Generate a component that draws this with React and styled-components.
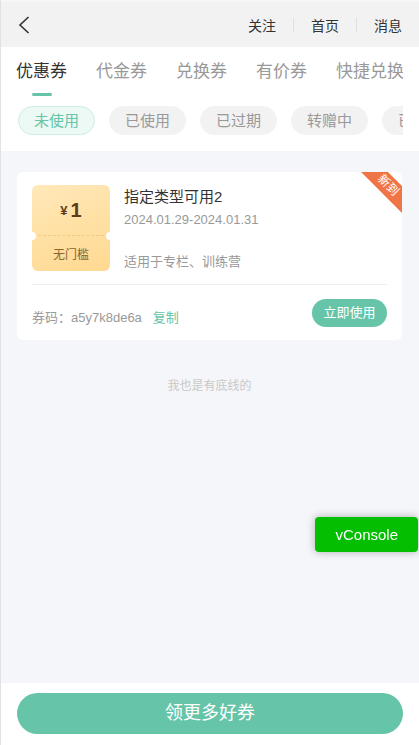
import React from "react";
import styled, { createGlobalStyle } from "styled-components";

const tabs = ["优惠券", "代金券", "兑换券", "有价券", "快捷兑换"];
const filters = ["未使用", "已使用", "已过期", "转赠中", "已转赠"];

const GlobalStyle = createGlobalStyle`
  * { box-sizing: border-box; }
  html, body { margin: 0; padding: 0; }
  body {
    font-family: "Liberation Sans", "Noto Sans CJK SC", sans-serif;
    color: #333;
    background: #fff;
  }
`;

const Page = styled.div`
  height: 100vh;
  display: flex;
  flex-direction: column;
  border-left: 1px solid #e2e2e2;
  overflow: hidden;
`;

const Header = styled.div`
  height: 47px;
  flex-shrink: 0;
  display: flex;
  align-items: center;
  background: #f2f2f2;
  border-top: 2px solid #f7f7f7;
`;

const Back = styled.div`
  width: 46px;
  padding-left: 17px;
  display: flex;
  align-items: center;
  flex: 1;
`;

const NavLink = styled.span`
  padding: 0 17px;
  font-size: 14px;
  color: #333;
`;

const Sep = styled.span`
  width: 1px;
  height: 14px;
  background: #e0e0e0;
`;

const TabRow = styled.div`
  height: 50px;
  flex-shrink: 0;
  display: flex;
  gap: 29px;
  margin: 0 16px 0 15px;
  overflow: hidden;
  white-space: nowrap;
`;

const Tab = styled.div`
  position: relative;
  flex-shrink: 0;
  line-height: 50px;
  font-size: 17px;
  color: ${(p) => (p.$active ? "#333" : "#999")};

  &::after {
    content: "";
    display: ${(p) => (p.$active ? "block" : "none")};
    position: absolute;
    left: 50%;
    bottom: 1px;
    width: 20px;
    height: 3px;
    margin-left: -10px;
    border-radius: 2px;
    background: #66c5a8;
  }
`;

const FilterRow = styled.div`
  flex-shrink: 0;
  display: flex;
  gap: 14px;
  margin: 0 16px;
  padding: 9px 0 16px 1px;
  overflow: hidden;
  white-space: nowrap;
`;

const Pill = styled.div`
  flex-shrink: 0;
  height: 29px;
  line-height: 27px;
  padding: 0 15px;
  border-radius: 15px;
  font-size: 15px;
  border: 1px solid ${(p) => (p.$active ? "#cdeee2" : "#f2f2f2")};
  background: ${(p) => (p.$active ? "#ecf9f4" : "#f2f2f2")};
  color: ${(p) => (p.$active ? "#66c5a8" : "#999")};
`;

const Content = styled.div`
  flex: 1;
  background: #f5f6fa;
  padding: 21px 17px 0 16px;
`;

const Card = styled.div`
  position: relative;
  overflow: hidden;
  background: #fff;
  border-radius: 6px;
  padding: 13px 15px 13px 15px;
`;

const Ribbon = styled.div`
  position: absolute;
  top: 4px;
  right: -16px;
  width: 60px;
  height: 19px;
  line-height: 19px;
  text-align: center;
  transform: rotate(45deg);
  background: #f07546;
  color: #fff;
  font-size: 12px;
`;

const Top = styled.div`
  display: flex;
  gap: 14px;
  height: 86px;
`;

const Ticket = styled.div`
  position: relative;
  width: 78px;
  height: 86px;
  flex-shrink: 0;
  border-radius: 6px;
  background: linear-gradient(160deg, #ffe8b9, #ffd990);
  display: flex;
  flex-direction: column;

  &::before,
  &::after {
    content: "";
    position: absolute;
    top: 47px;
    width: 8px;
    height: 8px;
    border-radius: 50%;
    background: #fff;
  }
  &::before { left: -4px; }
  &::after { right: -4px; }
`;

const Amount = styled.div`
  height: 51px;
  display: flex;
  align-items: center;
  justify-content: center;
  color: #5c3d17;
  border-bottom: 1px dashed rgba(215, 160, 80, 0.35);
  margin: 0 6px;
`;

const Yen = styled.span`
  font-size: 13px;
  font-weight: bold;
  margin-right: 3px;
`;

const Num = styled.span`
  font-size: 20px;
  font-weight: bold;
`;

const Limit = styled.div`
  flex: 1;
  display: flex;
  align-items: center;
  justify-content: center;
  font-size: 12px;
  color: #8a6532;
`;

const Info = styled.div`
  display: flex;
  flex-direction: column;
  padding-top: 1px;
`;

const Title = styled.div`
  font-size: 15px;
  line-height: 22px;
  color: #333;
`;

const Sub = styled.div`
  font-size: 13px;
  line-height: 18px;
  color: #999;
  margin-top: ${(p) => p.$gap || 0}px;
`;

const Divider = styled.div`
  height: 1px;
  background: #eee;
  margin: 13px 0 14px;
`;

const Bottom = styled.div`
  display: flex;
  align-items: center;
  justify-content: space-between;
`;

const Code = styled.div`
  font-size: 13px;
  color: #999;
  padding-top: 6px;
`;

const Copy = styled.span`
  color: #66c5a8;
  margin-left: 11px;
`;

const UseButton = styled.div`
  width: 75px;
  height: 28px;
  line-height: 28px;
  border-radius: 14px;
  text-align: center;
  background: #66c5a8;
  color: #fff;
  font-size: 13px;
`;

const EndLine = styled.div`
  margin-top: 36px;
  text-align: center;
  font-size: 12px;
  color: #c8c8c8;
`;

const Footer = styled.div`
  flex-shrink: 0;
  height: 62px;
  padding: 10px 16px 11px 16px;
  background: #fff;
`;

const MoreButton = styled.div`
  height: 41px;
  line-height: 41px;
  border-radius: 21px;
  background: #66c5a8;
  color: #fff;
  text-align: center;
  font-size: 18px;
`;

const VConsole = styled.div`
  position: fixed;
  top: 517px;
  right: 1px;
  height: 35px;
  line-height: 35px;
  padding: 0 20px;
  border-radius: 4px;
  background: #04be02;
  color: #fff;
  font-size: 15px;
  box-shadow: 0 0 8px rgba(0, 0, 0, 0.3);
`;

export default function App() {
  return (
    <>
      <GlobalStyle />
      <Page>
        <Header>
          <Back>
            <svg width="12" height="18" viewBox="0 0 12 18">
              <polyline points="10.5,1 2,9 10.5,17" fill="none" stroke="#333" strokeWidth="1.6" />
            </svg>
          </Back>
          <NavLink>关注</NavLink>
          <Sep />
          <NavLink>首页</NavLink>
          <Sep />
          <NavLink>消息</NavLink>
        </Header>
        <TabRow>
          {tabs.map((t, i) => (
            <Tab key={t} $active={i === 0}>{t}</Tab>
          ))}
        </TabRow>
        <FilterRow>
          {filters.map((f, i) => (
            <Pill key={f} $active={i === 0}>{f}</Pill>
          ))}
        </FilterRow>
        <Content>
          <Card>
            <Ribbon>新到</Ribbon>
            <Top>
              <Ticket>
                <Amount>
                  <Yen>¥</Yen>
                  <Num>1</Num>
                </Amount>
                <Limit>无门槛</Limit>
              </Ticket>
              <Info>
                <Title>指定类型可用2</Title>
                <Sub $gap={3}>2024.01.29-2024.01.31</Sub>
                <Sub $gap={24}>适用于专栏、训练营</Sub>
              </Info>
            </Top>
            <Divider />
            <Bottom>
              <Code>
                券码：a5y7k8de6a<Copy>复制</Copy>
              </Code>
              <UseButton>立即使用</UseButton>
            </Bottom>
          </Card>
          <EndLine>我也是有底线的</EndLine>
        </Content>
        <Footer>
          <MoreButton>领更多好券</MoreButton>
        </Footer>
        <VConsole>vConsole</VConsole>
      </Page>
    </>
  );
}
